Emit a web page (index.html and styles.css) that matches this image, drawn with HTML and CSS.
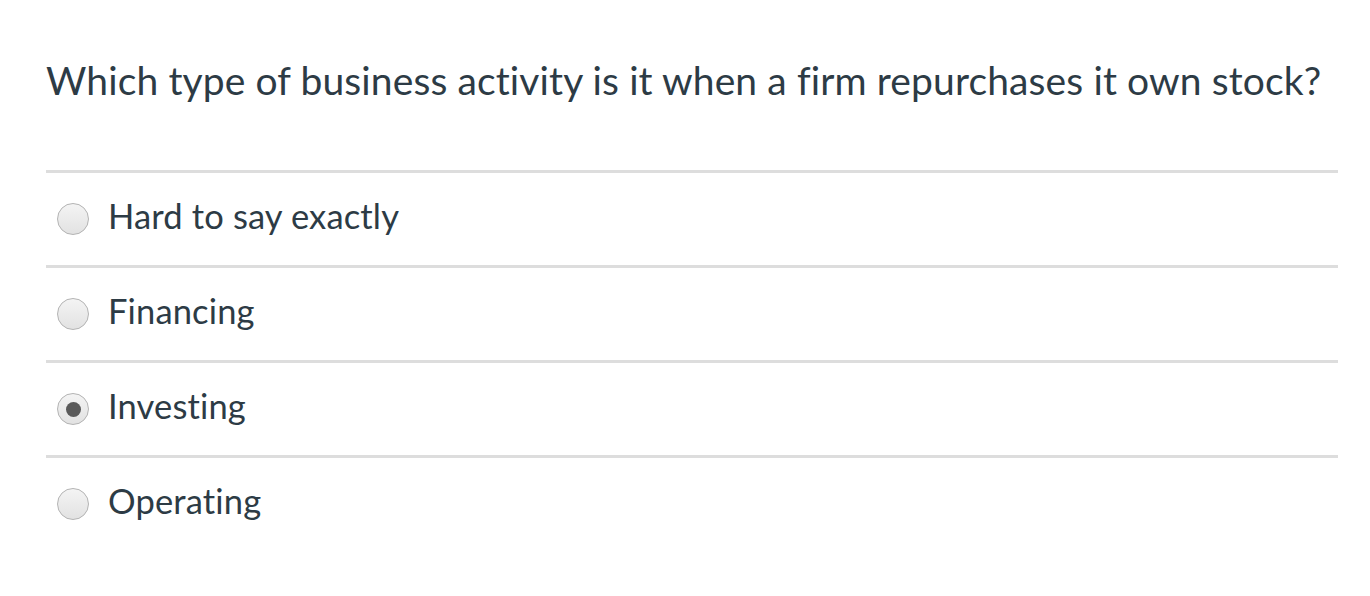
FILE: index.html
```html
<!DOCTYPE html>
<html>
<head>
<meta charset="utf-8">
<link rel="stylesheet" href="styles.css">
</head>
<body>
<div class="quiz">
  <h1 class="question">Which type of business activ&zwnj;ity is it when a firm repurchases it own stock?</h1>
  <ul class="answers">
    <li class="answer"><span class="radio"></span><span class="label">Hard to say exactly</span></li>
    <li class="answer"><span class="radio"></span><span class="label">Financing</span></li>
    <li class="answer"><span class="radio checked"></span><span class="label">Invest&zwnj;ing</span></li>
    <li class="answer"><span class="radio"></span><span class="label">Operat&zwnj;ing</span></li>
  </ul>
</div>
</body>
</html>
```

FILE: styles.css
```css
html, body {
  margin: 0;
  padding: 0;
  background: #ffffff;
}
body {
  font-family: Lato, "Liberation Sans", sans-serif;
  color: #2d3b45;
}
.quiz {
  margin-left: 46px;
  width: 1292px;
  padding-top: 52px;
}
.question {
  margin: 0;
  font-weight: 400;
  font-size: 39px;
  letter-spacing: 0.12px;
  line-height: 56px;
  height: 118px;
}
.answers {
  list-style: none;
  margin: 0;
  padding: 0;
}
.answer {
  display: flex;
  align-items: center;
  height: 92px;
  border-top: 3px solid #dddddd;
  padding-left: 11px;
}
.radio {
  width: 30px;
  height: 30px;
  border-radius: 50%;
  border: 1px solid #b3b3b3;
  background: linear-gradient(#f4f4f4, #e2e2e2);
  display: flex;
  align-items: center;
  justify-content: center;
  margin-right: 19px;
  flex: none;
}
.radio.checked::after {
  content: "";
  width: 15px;
  height: 15px;
  border-radius: 50%;
  background: #5a5a5a;
}
.label {
  font-size: 34.5px;
  letter-spacing: 0.15px;
  line-height: 40px;
  margin-top: -6px;
}
```
